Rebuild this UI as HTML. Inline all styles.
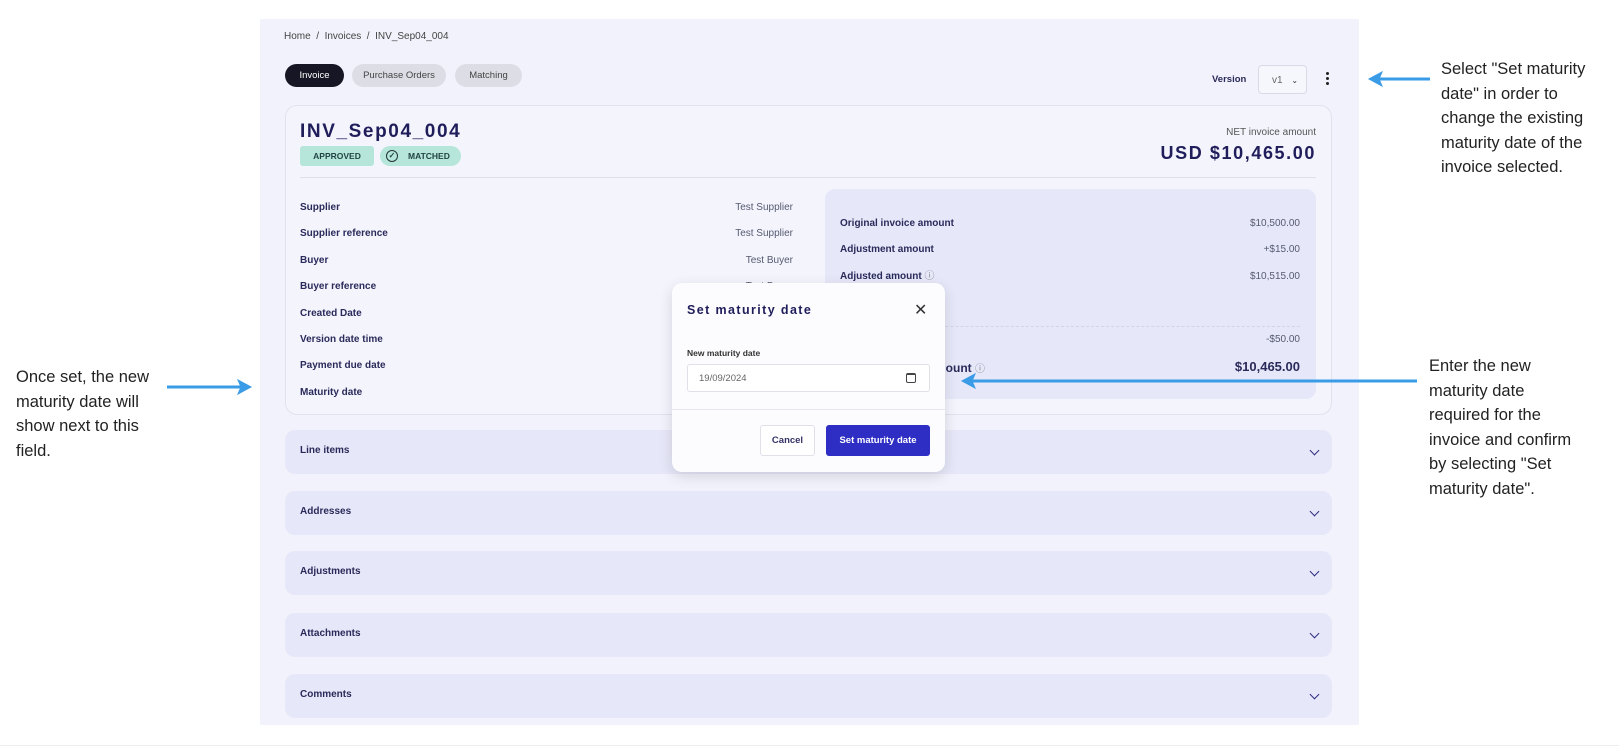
<!DOCTYPE html>
<html><head><meta charset="utf-8"><style>
*{box-sizing:border-box;margin:0;padding:0}
body{width:1619px;height:747px;background:#fff;position:relative;overflow:hidden;font-family:"Liberation Sans",sans-serif;color:#2a2a5a}
.a{position:absolute}
.app{left:260px;top:19px;width:1099px;height:706px;background:#f2f2fc}
.note{font-size:16.5px;line-height:24.6px;color:#222;}
.sm{font-size:10px}
.lbl{font-size:10px;font-weight:bold;color:#2a2a5a}
.val{font-size:10px;color:#555a70;text-align:right}
.tab{border-radius:12px;height:23px;font-size:9.5px;display:flex;align-items:center;justify-content:center}
.acc{left:285px;width:1047px;height:44px;background:#e6e7f8;border-radius:10px}
.acc span{position:absolute;left:15px;top:15px;font-size:10px;font-weight:bold;color:#2a2a5a}
.chev{position:absolute;right:14px;top:17px;width:7px;height:7px;border-right:1.5px solid #2d2d80;border-bottom:1.5px solid #2d2d80;transform:rotate(45deg)}
</style></head><body>
<div class="a app"></div>
<div class="a" style="left:0;top:745px;width:1619px;height:1px;background:#eee"></div>

<div class="a sm" style="left:284px;top:31px;color:#444">Home&nbsp; / &nbsp;Invoices&nbsp; / &nbsp;INV_Sep04_004</div>
<div class="a tab" style="left:285px;top:64px;width:59px;background:#161624;color:#fff">Invoice</div>
<div class="a tab" style="left:352px;top:64px;width:94px;background:#dddde6;color:#444">Purchase Orders</div>
<div class="a tab" style="left:455px;top:64px;width:67px;background:#dddde6;color:#444">Matching</div>

<div class="a" style="left:1212px;top:74px;font-size:9.5px;font-weight:bold;color:#2a2a5a">Version</div>
<div class="a" style="left:1258px;top:65px;width:49px;height:29px;border:1px solid #dadae6;border-radius:4px;background:#f6f6fd;font-size:10px;color:#666;padding:9px 0 0 13px">v1 <span style="font-size:8px;margin-left:6px;color:#333">&#8964;</span></div>
<div class="a" style="left:1326px;top:72px;width:3px;height:3px;border-radius:50%;background:#222;box-shadow:0 5px 0 #222,0 10px 0 #222"></div>

<!-- card -->
<div class="a" style="left:285px;top:105px;width:1047px;height:310px;border:1px solid #e2e2ee;border-radius:12px;background:#f4f4fd"></div>
<div class="a" style="left:300px;top:121px;font-size:19px;font-weight:900;color:#1f1d5a;letter-spacing:1.6px">INV_Sep04_004</div>
<div class="a" style="left:300px;top:146px;width:74px;height:20px;background:#b6e6da;border-radius:3px;font-size:8.5px;font-weight:bold;color:#244;display:flex;align-items:center;justify-content:center">APPROVED</div>
<div class="a" style="left:380px;top:146px;width:81px;height:20px;background:#b6e6da;border-radius:10px;font-size:8.5px;font-weight:bold;color:#244;display:flex;align-items:center;padding-left:6px"><span style="display:inline-block;width:12px;height:12px;border:1.3px solid #233;border-radius:50%;margin-right:10px;font-size:8px;line-height:10px;text-align:center">✓</span>MATCHED</div>
<div class="a" style="left:1100px;top:127px;width:216px;text-align:right;font-size:10px;color:#555">NET invoice amount</div>
<div class="a" style="left:1000px;top:143px;width:316px;text-align:right;font-size:18px;font-weight:900;color:#1f1d5a;letter-spacing:1.6px">USD $10,465.00</div>
<div class="a" style="left:300px;top:177px;width:1016px;height:1px;background:#e0e0ea"></div>

<div class="a lbl" style="left:300px;top:195px;line-height:26.4px">Supplier<br>Supplier reference<br>Buyer<br>Buyer reference<br>Created Date<br>Version date time<br>Payment due date<br>Maturity date</div>
<div class="a val" style="left:593px;top:195px;width:200px;line-height:26.4px">Test Supplier<br>Test Supplier<br>Test Buyer<br>Test Buyer</div>

<div class="a" style="left:825px;top:189px;width:491px;height:210px;background:#e6e8fa;border-radius:10px"></div>
<div class="a lbl" style="left:840px;top:211px;line-height:26.3px">Original invoice amount<br>Adjustment amount<br>Adjusted amount <span style="font-weight:normal;color:#888">&#9432;</span></div>
<div class="a val" style="left:1100px;top:211px;width:200px;line-height:26.3px">$10,500.00<br>+$15.00<br>$10,515.00</div>
<div class="a" style="left:840px;top:326px;width:460px;border-top:1px dashed #d4d4e8"></div>
<div class="a val" style="left:1100px;top:334px;width:200px">-$50.00</div>
<div class="a" style="left:935px;top:360px;font-size:12px;font-weight:bold;color:#2a2a5a">mount <span style="font-weight:normal;color:#888;font-size:10px">&#9432;</span></div>
<div class="a" style="left:1100px;top:359px;width:200px;text-align:right;font-size:13px;font-weight:bold;color:#2a2a5a">$10,465.00</div>

<div class="a acc" style="top:430px"><span>Line items</span><i class="chev"></i></div>
<div class="a acc" style="top:491px"><span>Addresses</span><i class="chev"></i></div>
<div class="a acc" style="top:551px"><span>Adjustments</span><i class="chev"></i></div>
<div class="a acc" style="top:613px"><span>Attachments</span><i class="chev"></i></div>
<div class="a acc" style="top:674px"><span>Comments</span><i class="chev"></i></div>

<!-- modal -->
<div class="a" style="left:672px;top:283px;width:273px;height:189px;background:#fcfcfe;border-radius:10px;box-shadow:0 4px 14px rgba(0,0,0,0.13)"></div>
<div class="a" style="left:687px;top:303px;font-size:12.5px;font-weight:900;color:#1f1d5a;letter-spacing:1.4px">Set maturity date</div>
<div class="a" style="left:914px;top:300px;font-size:16px;color:#333">&#10005;</div>
<div class="a" style="left:687px;top:348px;font-size:8.5px;font-weight:bold;color:#333">New maturity date</div>
<div class="a" style="left:687px;top:364px;width:243px;height:28px;border:1px solid #e0e0e8;border-radius:3px;background:#fff;font-size:9.5px;color:#666;padding:8px 0 0 11px">19/09/2024</div>
<div class="a" style="left:906px;top:373px;width:10px;height:10px;border:1.2px solid #444;border-radius:2px;border-top-width:2.5px"></div>
<div class="a" style="left:672px;top:409px;width:273px;height:1px;background:#e6e6ee"></div>
<div class="a" style="left:760px;top:425px;width:55px;height:31px;border:1px solid #e0e0e8;border-radius:3px;background:#fff;font-size:9.5px;font-weight:bold;color:#333366;display:flex;align-items:center;justify-content:center">Cancel</div>
<div class="a" style="left:826px;top:425px;width:104px;height:31px;background:#2e2dc4;border-radius:3px;font-size:9.5px;font-weight:bold;color:#fff;display:flex;align-items:center;justify-content:center">Set maturity date</div>

<!-- arrows -->
<svg class="a" style="left:0;top:0" width="1619" height="747">
<g stroke="#3a9be6" stroke-width="3" fill="#3a9be6">
<line x1="167" y1="387" x2="243" y2="387"/><polygon points="251,387 238,380 241,387 238,394" stroke-width="1"/>
<line x1="1417" y1="381" x2="970" y2="381"/><polygon points="962,381 975,374 972,381 975,388" stroke-width="1"/>
<line x1="1430" y1="79" x2="1377" y2="79"/><polygon points="1369,79 1382,72 1379,79 1382,86" stroke-width="1"/>
</g></svg>

<div class="a note" style="left:16px;top:365px">Once set, the new<br>maturity date will<br>show next to this<br>field.</div>
<div class="a note" style="left:1429px;top:354px">Enter the new<br>maturity date<br>required for the<br>invoice and confirm<br>by selecting "Set<br>maturity date".</div>
<div class="a note" style="left:1441px;top:57px">Select "Set maturity<br>date" in order to<br>change the existing<br>maturity date of the<br>invoice selected.</div>
</body></html>
